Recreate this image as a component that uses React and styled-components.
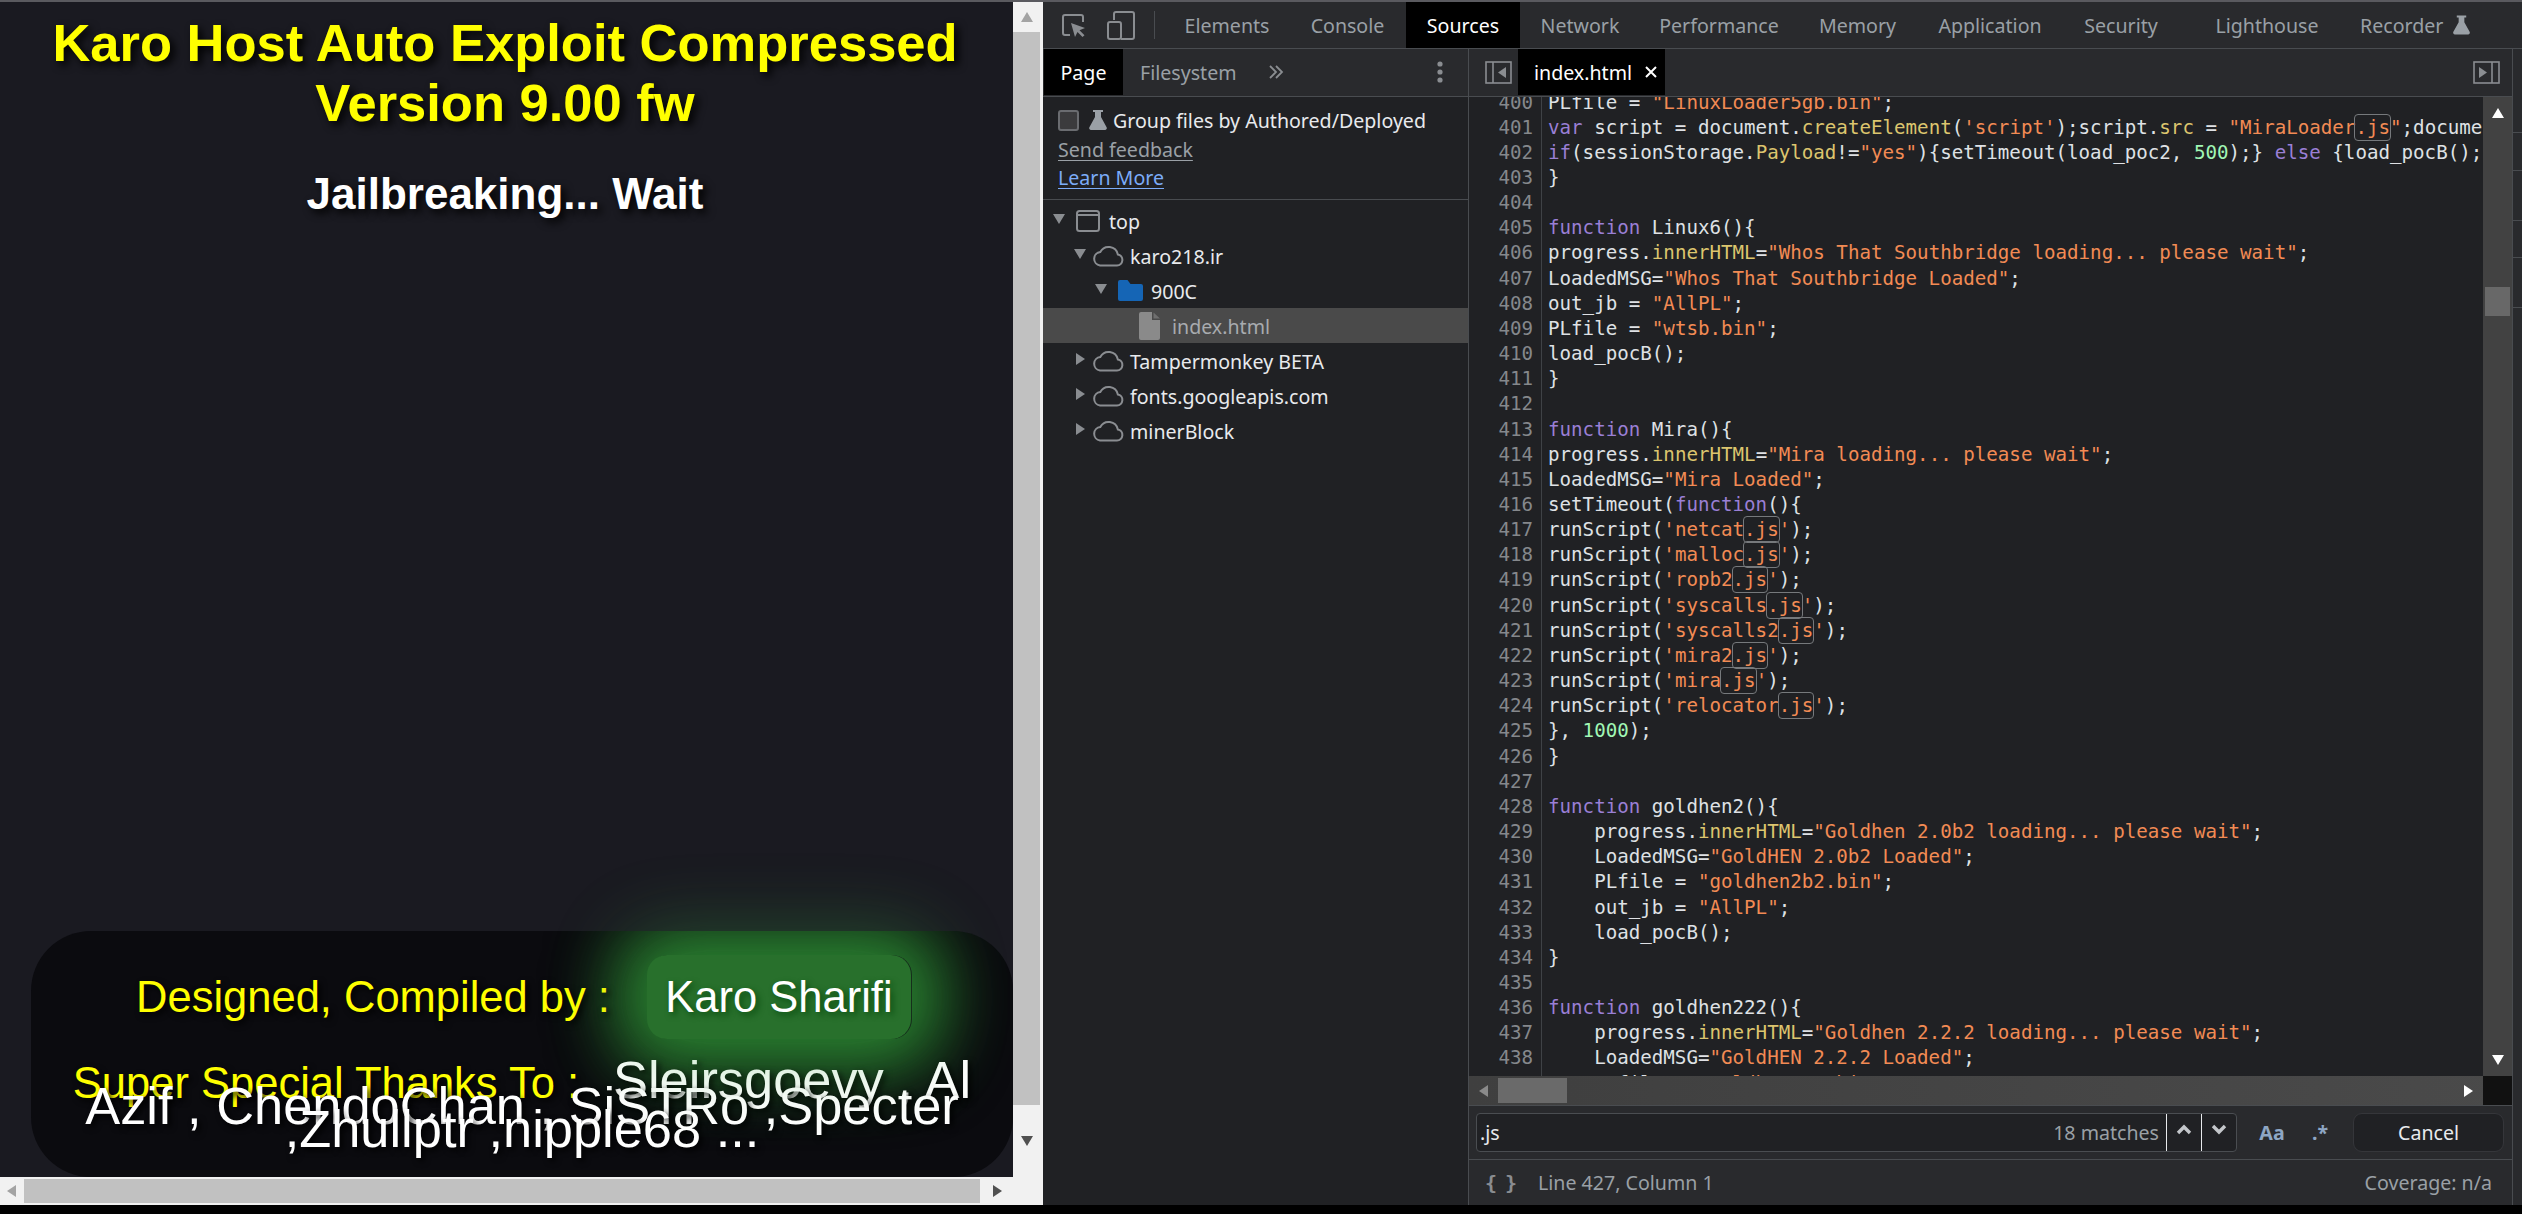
import React from "react";
import styled, { createGlobalStyle } from "styled-components";

const GlobalStyle = createGlobalStyle`
    html, body {
        margin: 0;
        padding: 0;
        background: #000;
        overflow: hidden;
    }
    * {
        box-sizing: border-box;
    }
`;

const UI_FONT = `"Noto Sans", "Open Sans", sans-serif`;
const CODE_FONT = `"DejaVu Sans Mono", "Liberation Mono", monospace`;

const SOURCE = [
    `PLfile = "LinuxLoader5gb.bin";`,
    `var script = document.createElement('script');script.src = "MiraLoader.js";docume`,
    `if(sessionStorage.Payload!="yes"){setTimeout(load_poc2, 500);} else {load_pocB();`,
    `}`,
    ``,
    `function Linux6(){`,
    `progress.innerHTML="Whos That Southbridge loading... please wait";`,
    `LoadedMSG="Whos That Southbridge Loaded";`,
    `out_jb = "AllPL";`,
    `PLfile = "wtsb.bin";`,
    `load_pocB();`,
    `}`,
    ``,
    `function Mira(){`,
    `progress.innerHTML="Mira loading... please wait";`,
    `LoadedMSG="Mira Loaded";`,
    `setTimeout(function(){`,
    `runScript('netcat.js');`,
    `runScript('malloc.js');`,
    `runScript('ropb2.js');`,
    `runScript('syscalls.js');`,
    `runScript('syscalls2.js');`,
    `runScript('mira2.js');`,
    `runScript('mira.js');`,
    `runScript('relocator.js');`,
    `}, 1000);`,
    `}`,
    ``,
    `function goldhen2(){`,
    `    progress.innerHTML="Goldhen 2.0b2 loading... please wait";`,
    `    LoadedMSG="GoldHEN 2.0b2 Loaded";`,
    `    PLfile = "goldhen2b2.bin";`,
    `    out_jb = "AllPL";`,
    `    load_pocB();`,
    `}`,
    ``,
    `function goldhen222(){`,
    `    progress.innerHTML="Goldhen 2.2.2 loading... please wait";`,
    `    LoadedMSG="GoldHEN 2.2.2 Loaded";`,
    `    PLfile = "goldhen222.bin";`,
];

const TOP_TABS = [
    { label: "Elements", width: 124 },
    { label: "Console", width: 117 },
    { label: "Sources", width: 114, active: true },
    { label: "Network", width: 120 },
    { label: "Performance", width: 158 },
    { label: "Memory", width: 119 },
    { label: "Application", width: 146 },
    { label: "Security", width: 116 },
    { label: "Lighthouse", width: 176 },
];

const TREE = [
    { label: "top", level: 0, open: true, icon: "frame" },
    { label: "karo218.ir", level: 1, open: true, icon: "cloud" },
    { label: "900C", level: 2, open: true, icon: "folder" },
    { label: "index.html", level: 3, icon: "file", selected: true },
    { label: "Tampermonkey BETA", level: 1, icon: "cloud" },
    { label: "fonts.googleapis.com", level: 1, icon: "cloud" },
    { label: "minerBlock", level: 1, icon: "cloud" },
];

const TOKEN = /("[^"]*"|'[^']*')|\b(var|if|else|function)\b|\b(\d+)\b|\.(\w+)/g;

// split one line of source into coloured spans, the ".js" hits get a box
const highlight = (line) => {
    const out = [];
    let last = 0;
    let k = 0;
    for (const m of line.matchAll(TOKEN)) {
        out.push(line.slice(last, m.index));
        if (m[1]) {
            const parts = m[1].split(".js");
            out.push(
                <Str key={k++}>
                    {parts.map((part, i) => (
                        <React.Fragment key={i}>
                            {i > 0 && <Match>.js</Match>}
                            {part}
                        </React.Fragment>
                    ))}
                </Str>
            );
        } else if (m[2]) {
            out.push(<Keyword key={k++}>{m[2]}</Keyword>);
        } else if (m[3]) {
            out.push(<Num key={k++}>{m[3]}</Num>);
        } else {
            out.push(".");
            out.push(<Prop key={k++}>{m[4]}</Prop>);
        }
        last = m.index + m[0].length;
    }
    out.push(line.slice(last));
    return out;
};

const Triangle = ({ dir = "down", size = 12, color = "#8a8d91" }) => {
    const points = {
        down: "0,1 12,1 6,11",
        up: "0,11 12,11 6,1",
        left: "10,0 10,12 1,6",
        right: "2,0 2,12 11,6",
    };
    return (
        <svg width={size} height={size} viewBox="0 0 12 12">
            <polygon points={points[dir]} fill={color} />
        </svg>
    );
};

const FlaskIcon = ({ width = 18, height = 20 }) => (
    <svg width={width} height={height} viewBox="0 0 18 20">
        <path
            d="M4 0h10v2h-2v5l5.6 10.2A1.9 1.9 0 0 1 16 20H2A1.9 1.9 0 0 1 .4 17.2L6 7V2H4z"
            fill="#9aa0a6"
        />
    </svg>
);

const InspectIcon = () => (
    <svg width="24" height="23" viewBox="0 0 24 23">
        <path
            d="M8 21H3a2 2 0 0 1-2-2V3a2 2 0 0 1 2-2h16a2 2 0 0 1 2 2v5"
            fill="none"
            stroke="#8a8d91"
            strokeWidth="2"
        />
        <path d="M9 9l14 5-5.5 2.2 5 5-2 1.8-5-5L13 23z" fill="#8a8d91" />
    </svg>
);

const DeviceIcon = () => (
    <svg width="28" height="29" viewBox="0 0 28 29">
        <path
            d="M7 9V3a2 2 0 0 1 2-2h16a2 2 0 0 1 2 2v23a2 2 0 0 1-2 2H14"
            fill="none"
            stroke="#8a8d91"
            strokeWidth="2"
        />
        <rect x="1" y="11" width="13" height="17" rx="2" fill="none" stroke="#8a8d91" strokeWidth="2" />
    </svg>
);

const PanelIcon = ({ side }) => (
    <svg width="27" height="23" viewBox="0 0 27 23">
        <rect x="1" y="1" width="25" height="21" fill="none" stroke="#8a8d91" strokeWidth="1.6" />
        {side === "left" ? (
            <>
                <line x1="8" y1="1" x2="8" y2="22" stroke="#8a8d91" strokeWidth="1.6" />
                <polygon points="21,6 21,17 13,11.5" fill="#8a8d91" />
            </>
        ) : (
            <>
                <line x1="19" y1="1" x2="19" y2="22" stroke="#8a8d91" strokeWidth="1.6" />
                <polygon points="6,6 6,17 14,11.5" fill="#8a8d91" />
            </>
        )}
    </svg>
);

const TreeIcon = ({ type }) => {
    if (type === "frame") {
        return (
            <svg width="24" height="22" viewBox="0 0 24 22">
                <rect x="1" y="1" width="22" height="20" rx="2.5" fill="none" stroke="#8a8d91" strokeWidth="2" />
                <line x1="1" y1="5" x2="23" y2="5" stroke="#8a8d91" strokeWidth="2" />
            </svg>
        );
    }
    if (type === "cloud") {
        return (
            <svg width="32" height="22" viewBox="0 0 32 22">
                <path
                    d="M8 20.5h17a5.6 5.6 0 0 0 .8-11.1A9.4 9.4 0 0 0 8.3 7 6.8 6.8 0 0 0 8 20.5z"
                    fill="none"
                    stroke="#8a8d91"
                    strokeWidth="2"
                />
            </svg>
        );
    }
    if (type === "folder") {
        return (
            <svg width="25" height="21" viewBox="0 0 25 21">
                <path
                    d="M0 2a2 2 0 0 1 2-2h7.5l3 4H23a2 2 0 0 1 2 2v13a2 2 0 0 1-2 2H2a2 2 0 0 1-2-2z"
                    fill="#1565b5"
                />
            </svg>
        );
    }
    return (
        <svg width="21" height="28" viewBox="0 0 21 28">
            <path d="M2 0h11v8h8v18a2 2 0 0 1-2 2H2a2 2 0 0 1-2-2V2a2 2 0 0 1 2-2z" fill="#8a8a8a" />
            <path d="M14.5 0.5L21 6.5h-6.5z" fill="#6f6f6f" />
        </svg>
    );
};

const CloseIcon = () => (
    <svg width="12" height="12" viewBox="0 0 12 12">
        <path d="M1 1l10 10M11 1L1 11" stroke="#fff" strokeWidth="2" />
    </svg>
);

const Chevron = ({ up }) => (
    <svg width="16" height="11" viewBox="0 0 16 11">
        <path
            d={up ? "M2 9l6-6 6 6" : "M2 2l6 6 6-6"}
            fill="none"
            stroke="#c4c7cb"
            strokeWidth="3.4"
        />
    </svg>
);

const MoreTabsIcon = () => (
    <svg width="16" height="14" viewBox="0 0 16 14">
        <path d="M2 1l6 6-6 6M8 1l6 6-6 6" fill="none" stroke="#8a8d91" strokeWidth="1.8" />
    </svg>
);

const KebabIcon = () => (
    <svg width="6" height="22" viewBox="0 0 6 22">
        <circle cx="3" cy="3" r="2.6" fill="#8a8d91" />
        <circle cx="3" cy="11" r="2.6" fill="#8a8d91" />
        <circle cx="3" cy="19" r="2.6" fill="#8a8d91" />
    </svg>
);

const App = () => {
    return (
        <>
            <GlobalStyle />
            <Screen>
                <BrowserArea>
                    <PageColumn>
                        <PageRow>
                            <PageView>
                                <Title>
                                    Karo Host Auto Exploit Compressed
                                    <br />
                                    Version 9.00 fw
                                </Title>
                                <Status>Jailbreaking... Wait</Status>
                                <Credits>
                                    <GlowClip>
                                        <GlowSpot />
                                    </GlowClip>
                                    <DesignedRow>
                                        <YellowText>Designed, Compiled by :</YellowText>
                                        <AuthorBadge>Karo Sharifi</AuthorBadge>
                                    </DesignedRow>
                                    <ThanksText>
                                        <YellowText>Super Special Thanks To :</YellowText>
                                        <Names>
                                            Sleirsgoevy , Al Azif , ChendoChan , SiSTRo ,Specter
                                            ,Zhullptr ,nipple68 ...
                                        </Names>
                                    </ThanksText>
                                </Credits>
                            </PageView>
                            <PageVBar>
                                <PageArrow>
                                    <Triangle dir="up" color="#a3a3a3" />
                                </PageArrow>
                                <PageVThumb />
                                <PageArrow $grow>
                                    <Triangle color="#505050" />
                                </PageArrow>
                            </PageVBar>
                        </PageRow>
                        <PageHBar>
                            <PageHArrow>
                                <Triangle dir="left" color="#a3a3a3" />
                            </PageHArrow>
                            <PageHThumb />
                            <PageHArrow $grow>
                                <Triangle dir="right" color="#505050" />
                            </PageHArrow>
                            <PageCorner />
                        </PageHBar>
                    </PageColumn>

                    <DevTools>
                        <TopBar>
                            <TopIcons>
                                <InspectIcon />
                                <DeviceIcon />
                                <TopDivider />
                            </TopIcons>
                            {TOP_TABS.map((tab) => (
                                <TopTab key={tab.label} $width={tab.width} $active={tab.active}>
                                    {tab.label}
                                </TopTab>
                            ))}
                            <RecorderTab>
                                Recorder
                                <FlaskIcon width={17} height={20} />
                            </RecorderTab>
                        </TopBar>

                        <Panels>
                            <Sidebar>
                                <SubBar>
                                    <PageTab>Page</PageTab>
                                    <FileTab>Filesystem</FileTab>
                                    <MoreTabs>
                                        <MoreTabsIcon />
                                    </MoreTabs>
                                    <KebabSlot>
                                        <KebabIcon />
                                    </KebabSlot>
                                </SubBar>
                                <GroupBox>
                                    <GroupRow>
                                        <CheckBox />
                                        <FlaskIcon />
                                        <GroupLabel>Group files by Authored/Deployed</GroupLabel>
                                    </GroupRow>
                                    <TextLink $color="#9aa0a6">Send feedback</TextLink>
                                    <TextLink $color="#7cacf8">Learn More</TextLink>
                                </GroupBox>
                                <Tree>
                                    {TREE.map((item) => (
                                        <TreeRow
                                            key={item.label}
                                            $level={item.level}
                                            $selected={item.selected}
                                        >
                                            <TreeArrow>
                                                {item.level < 3 && (
                                                    <Triangle dir={item.open ? "down" : "right"} />
                                                )}
                                            </TreeArrow>
                                            <TreeIconSlot $type={item.icon}>
                                                <TreeIcon type={item.icon} />
                                            </TreeIconSlot>
                                            <TreeLabel $selected={item.selected}>{item.label}</TreeLabel>
                                        </TreeRow>
                                    ))}
                                </Tree>
                            </Sidebar>

                            <Editor>
                                <SubBar>
                                    <PanelToggle>
                                        <PanelIcon side="left" />
                                    </PanelToggle>
                                    <FileTabActive>
                                        index.html
                                        <CloseIcon />
                                    </FileTabActive>
                                    <PanelToggleRight>
                                        <PanelIcon side="right" />
                                    </PanelToggleRight>
                                </SubBar>
                                <CodeRow>
                                    <CodeScroll>
                                        <CodeInner>
                                            {SOURCE.map((line, i) => (
                                                <CodeLine key={i}>
                                                    <LineNo>{400 + i}</LineNo>
                                                    <LineText>{highlight(line)}</LineText>
                                                </CodeLine>
                                            ))}
                                        </CodeInner>
                                    </CodeScroll>
                                    <CodeVBar>
                                        <CodeArrow>
                                            <Triangle dir="up" color="#fff" />
                                        </CodeArrow>
                                        <CodeVThumb />
                                        <CodeArrow $grow>
                                            <Triangle color="#fff" />
                                        </CodeArrow>
                                    </CodeVBar>
                                </CodeRow>
                                <CodeHBar>
                                    <CodeHArrow>
                                        <Triangle dir="left" color="#8a8a8a" />
                                    </CodeHArrow>
                                    <CodeHThumb />
                                    <CodeHArrow $grow>
                                        <Triangle dir="right" color="#fff" />
                                    </CodeHArrow>
                                    <CodeCorner />
                                </CodeHBar>
                                <SearchBar>
                                    <SearchBox>
                                        <SearchText>.js</SearchText>
                                        <MatchCount>18 matches</MatchCount>
                                        <SearchStep>
                                            <Chevron up />
                                        </SearchStep>
                                        <SearchStep>
                                            <Chevron />
                                        </SearchStep>
                                    </SearchBox>
                                    <CaseToggle>Aa</CaseToggle>
                                    <RegexToggle>.*</RegexToggle>
                                    <CancelButton>Cancel</CancelButton>
                                </SearchBar>
                                <StatusBar>
                                    <Braces>{"{ }"}</Braces>
                                    <StatusText>Line 427, Column 1</StatusText>
                                    <Coverage>Coverage: n/a</Coverage>
                                </StatusBar>
                            </Editor>

                            <SideStub>
                                {[84, 38, 50, 37, 50].map((h, i) => (
                                    <StubRow key={i} $height={h} />
                                ))}
                            </SideStub>
                        </Panels>
                    </DevTools>
                </BrowserArea>
            </Screen>
        </>
    );
};

export default App;

// page strip and the exploit page on the left

const Screen = styled.div`
    width: 2522px;
    height: 1214px;
    overflow: hidden;
    background: #000;
    border-top: 2px solid #5a5a5f;
    padding-bottom: 9px;
`;

const BrowserArea = styled.div`
    display: flex;
    height: 100%;
`;

const PageColumn = styled.div`
    width: 1040px;
    flex: none;
    display: flex;
    flex-direction: column;
`;

const PageRow = styled.div`
    flex: 1;
    display: flex;
    min-height: 0;
`;

const PageView = styled.div`
    flex: 1;
    display: flex;
    flex-direction: column;
    align-items: center;
    background: #1a1a21;
    padding-top: 11px;
    font-family: "Liberation Sans", Arial, sans-serif;
    text-align: center;
`;

const Title = styled.h1`
    margin: 0 3px 0 0;
    font-size: 52.5px;
    line-height: 60px;
    font-weight: 700;
    color: #ffff00;
    text-shadow: 4px 4px 8px #000;
`;

const Status = styled.div`
    margin: 36px 3px 0 0;
    font-size: 44px;
    line-height: 50px;
    font-weight: 700;
    color: #fff;
    text-shadow: 4px 4px 8px #000;
`;

const Credits = styled.div`
    position: relative;
    margin-top: auto;
    margin-left: 31px;
    align-self: stretch;
    height: 246px;
    background: #0b0b0f;
    border-radius: 60px;
    padding-top: 24px;
    font-size: 43.5px;
`;

const GlowClip = styled.div`
    position: absolute;
    inset: 0;
    overflow: hidden;
    border-radius: 60px;
`;

const GlowSpot = styled.div`
    position: absolute;
    left: 617px;
    top: 24px;
    width: 264px;
    height: 84px;
    border-radius: 20px;
    box-shadow: 0 0 70px 28px rgba(36, 118, 40, 0.97);
`;

const DesignedRow = styled.div`
    position: relative;
    display: flex;
    justify-content: center;
    align-items: center;
    gap: 37px;
    padding-left: 3px;
`;

const YellowText = styled.span`
    font-size: 43.5px;
    color: #ffff00;
    text-shadow: 3px 3px 6px #000;
`;

const AuthorBadge = styled.div`
    position: relative;
    z-index: 2;
    width: 264px;
    height: 84px;
    display: flex;
    align-items: center;
    justify-content: center;
    border-radius: 20px;
    background: #28702c;
    color: #fff;
    text-shadow: 3px 3px 6px #0a4d10;
    box-shadow: 0 0 70px 28px rgba(60, 170, 70, 0.32);
`;

const ThanksText = styled.p`
    position: relative;
    margin: 30px 0 0;
    font-size: 52.4px;
    line-height: 23px;
    text-align: center;
`;

const Names = styled.span`
    margin-left: 34px;
    color: #fff;
    text-shadow: 3px 3px 6px #000;
`;

const PageVBar = styled.div`
    width: 27px;
    background: #f1f1f1;
    display: flex;
    flex-direction: column;
`;

const PageArrow = styled.div`
    height: 30px;
    display: flex;
    align-items: center;
    justify-content: center;
    ${(p) => p.$grow && "flex: 1;"}
`;

const PageVThumb = styled.div`
    height: 1073px;
    background: #c1c1c1;
`;

const PageHBar = styled.div`
    height: 28px;
    flex: none;
    background: #f1f1f1;
    display: flex;
    align-items: center;
`;

const PageHArrow = styled.div`
    width: 24px;
    display: flex;
    justify-content: center;
    ${(p) => p.$grow && "flex: 1;"}
`;

const PageHThumb = styled.div`
    width: 956px;
    height: 24px;
    background: #c1c1c1;
`;

const PageCorner = styled.div`
    width: 27px;
    height: 100%;
    background: #f1f1f1;
`;

// devtools

const DevTools = styled.div`
    flex: 1;
    min-width: 0;
    display: flex;
    flex-direction: column;
    border-left: 3px solid #f1f1f1;
    background: #292a2d;
    font-family: ${UI_FONT};
    font-size: 19.6px;
    color: #e8eaed;
`;

const TopBar = styled.div`
    height: 47px;
    flex: none;
    display: flex;
    align-items: stretch;
    border-bottom: 1px solid #494c50;
    white-space: nowrap;
    overflow: hidden;
`;

const TopIcons = styled.div`
    width: 122px;
    flex: none;
    display: flex;
    align-items: center;
    padding-left: 19px;
    gap: 21px;
`;

const TopDivider = styled.div`
    width: 1px;
    height: 28px;
    background: #494c50;
    margin-left: -2px;
`;

const TopTab = styled.div`
    width: ${(p) => p.$width}px;
    flex: none;
    display: flex;
    align-items: center;
    justify-content: center;
    color: ${(p) => (p.$active ? "#fff" : "#9aa0a6")};
    background: ${(p) => (p.$active ? "#000" : "transparent")};
`;

const RecorderTab = styled.div`
    display: flex;
    align-items: center;
    gap: 10px;
    padding-left: 5px;
    color: #9aa0a6;
`;

const Panels = styled.div`
    flex: 1;
    min-height: 0;
    display: flex;
`;

const Sidebar = styled.div`
    width: 426px;
    flex: none;
    display: flex;
    flex-direction: column;
    background: #202124;
    border-right: 1px solid #494c50;
`;

const SubBar = styled.div`
    height: 48px;
    flex: none;
    display: flex;
    align-items: stretch;
    background: #292a2d;
    border-bottom: 1px solid #494c50;
    padding-bottom: 1px;
`;

const PageTab = styled.div`
    width: 79px;
    margin-left: 1px;
    display: flex;
    align-items: center;
    justify-content: center;
    background: #000;
    color: #fff;
`;

const FileTab = styled.div`
    display: flex;
    align-items: center;
    padding-left: 17px;
    width: 145px;
    color: #9aa0a6;
`;

const MoreTabs = styled.div`
    display: flex;
    align-items: center;
`;

const KebabSlot = styled.div`
    margin-left: auto;
    width: 56px;
    display: flex;
    align-items: center;
    justify-content: center;
`;

const GroupBox = styled.div`
    height: 103px;
    flex: none;
    padding: 8px 15px 0;
    border-bottom: 1px solid #494c50;
    display: flex;
    flex-direction: column;
    align-items: flex-start;
`;

const GroupRow = styled.div`
    display: flex;
    align-items: center;
    height: 30px;
    margin-bottom: 1px;
`;

const CheckBox = styled.div`
    width: 21px;
    height: 21px;
    margin-right: 10px;
    border: 2px solid #6a6c70;
    border-radius: 3px;
    background: #3b3b3d;
`;

const GroupLabel = styled.span`
    margin-left: 6px;
    color: #e8eaed;
`;

const TextLink = styled.span`
    line-height: 28px;
    color: ${(p) => p.$color};
    text-decoration: underline;
    text-underline-offset: 3px;
`;

const Tree = styled.div`
    padding-top: 3px;
`;

const TreeRow = styled.div`
    height: 35px;
    display: flex;
    align-items: center;
    padding-left: ${(p) => 10 + p.$level * 21}px;
    background: ${(p) => (p.$selected ? "#4a4a4a" : "transparent")};
`;

const TreeArrow = styled.div`
    width: 21px;
    flex: none;
    display: flex;
    margin-top: -3px;
`;

const TreeIconSlot = styled.div`
    flex: none;
    display: flex;
    width: ${(p) => (p.$type === "file" ? 33 : p.$type === "cloud" ? 38 : 33)}px;
    margin-left: ${(p) => (p.$type === "cloud" ? -3 : 2)}px;
`;

const TreeLabel = styled.span`
    margin-top: 2px;
    color: ${(p) => (p.$selected ? "#a8abaf" : "#e8eaed")};
`;

const Editor = styled.div`
    flex: 1;
    min-width: 0;
    display: flex;
    flex-direction: column;
`;

const PanelToggle = styled.div`
    width: 49px;
    display: flex;
    align-items: center;
    padding-left: 16px;
`;

const FileTabActive = styled.div`
    width: 147px;
    display: flex;
    align-items: center;
    justify-content: space-between;
    padding: 0 8px 0 16px;
    background: #000;
    color: #fff;
`;

const PanelToggleRight = styled.div`
    margin-left: auto;
    width: 39px;
    display: flex;
    align-items: center;
`;

const CodeRow = styled.div`
    flex: 1;
    min-height: 0;
    display: flex;
`;

const CodeScroll = styled.div`
    flex: 1;
    min-width: 0;
    overflow: hidden;
    background: #202124;
`;

const CodeInner = styled.div`
    margin-top: -7.5px;
    font-family: ${CODE_FONT};
    font-size: 19.17px;
    line-height: 25.17px;
    white-space: pre;
    color: #dfe1e5;
`;

const CodeLine = styled.div`
    display: flex;
    height: 25.17px;
`;

const LineNo = styled.div`
    width: 73px;
    flex: none;
    padding-right: 8px;
    text-align: right;
    color: #85888c;
    border-right: 1px solid #3f4246;
`;

const LineText = styled.div`
    padding-left: 6px;
`;

const Str = styled.span`
    color: #f28b54;
`;

const Keyword = styled.span`
    color: #9a7fd5;
`;

const Num = styled.span`
    color: #a1f7b5;
`;

const Prop = styled.span`
    color: #dcc56e;
`;

const Match = styled.span`
    margin: 0 -1px;
    padding: 1px 0;
    border: 1px solid #76797c;
    border-radius: 4px;
`;

const CodeVBar = styled.div`
    width: 29px;
    flex: none;
    background: #424242;
    display: flex;
    flex-direction: column;
    align-items: center;
`;

const CodeArrow = styled.div`
    height: 32px;
    display: flex;
    justify-content: center;
    align-items: center;
    ${(p) => p.$grow && "flex: 1; align-items: flex-end; padding-bottom: 10px;"}
`;

const CodeVThumb = styled.div`
    width: 25px;
    height: 29px;
    margin-top: 158px;
    background: #686868;
`;

const CodeHBar = styled.div`
    height: 30px;
    flex: none;
    display: flex;
    align-items: center;
    background: linear-gradient(90deg, #3f3f3f, #4a4a4a);
    border-bottom: 1px solid #494c50;
`;

const CodeHArrow = styled.div`
    width: 29px;
    display: flex;
    justify-content: center;
    ${(p) => p.$grow && "flex: 1; justify-content: flex-end; padding-right: 9px;"}
`;

const CodeHThumb = styled.div`
    width: 69px;
    height: 25px;
    background: #6a6a6a;
`;

const CodeCorner = styled.div`
    width: 29px;
    height: 100%;
    background: #111;
`;

const SearchBar = styled.div`
    height: 54px;
    flex: none;
    display: flex;
    align-items: center;
    padding-left: 7px;
    border-bottom: 1px solid #494c50;
`;

const SearchBox = styled.div`
    width: 761px;
    height: 39px;
    display: flex;
    align-items: center;
    background: #202124;
    border: 1px solid #4a4d51;
    border-radius: 4px;
`;

const SearchText = styled.span`
    flex: 1;
    padding-left: 3px;
    color: #e8eaed;
`;

const MatchCount = styled.span`
    padding-right: 7px;
    color: #9aa0a6;
`;

const SearchStep = styled.div`
    width: 35px;
    height: 100%;
    display: flex;
    align-items: center;
    justify-content: center;
    padding-bottom: 6px;
    border-left: 1px solid #e8eaed;
`;

const CaseToggle = styled.div`
    width: 70px;
    text-align: center;
    font-weight: 700;
    color: #8ea6c4;
`;

const RegexToggle = styled.div`
    width: 26px;
    text-align: center;
    font-weight: 700;
    color: #8ea6c4;
`;

const CancelButton = styled.div`
    width: 151px;
    height: 39px;
    margin-left: 20px;
    display: flex;
    align-items: center;
    justify-content: center;
    background: #202124;
    border: 1px solid #35363a;
    border-radius: 9px;
    color: #e8eaed;
`;

const StatusBar = styled.div`
    height: 45px;
    flex: none;
    display: flex;
    align-items: center;
    padding: 0 20px 0 16px;
    color: #9aa0a6;
`;

const Braces = styled.span`
    width: 53px;
    font-family: ${CODE_FONT};
    font-weight: 700;
    font-size: 20px;
    letter-spacing: -2px;
    color: #8a8d91;
`;

const StatusText = styled.span``;

const Coverage = styled.span`
    margin-left: auto;
`;

const SideStub = styled.div`
    width: 10px;
    flex: none;
    border-left: 1px solid #494c50;
`;

const StubRow = styled.div`
    height: ${(p) => p.$height}px;
    border-bottom: 1px solid #494c50;
`;
